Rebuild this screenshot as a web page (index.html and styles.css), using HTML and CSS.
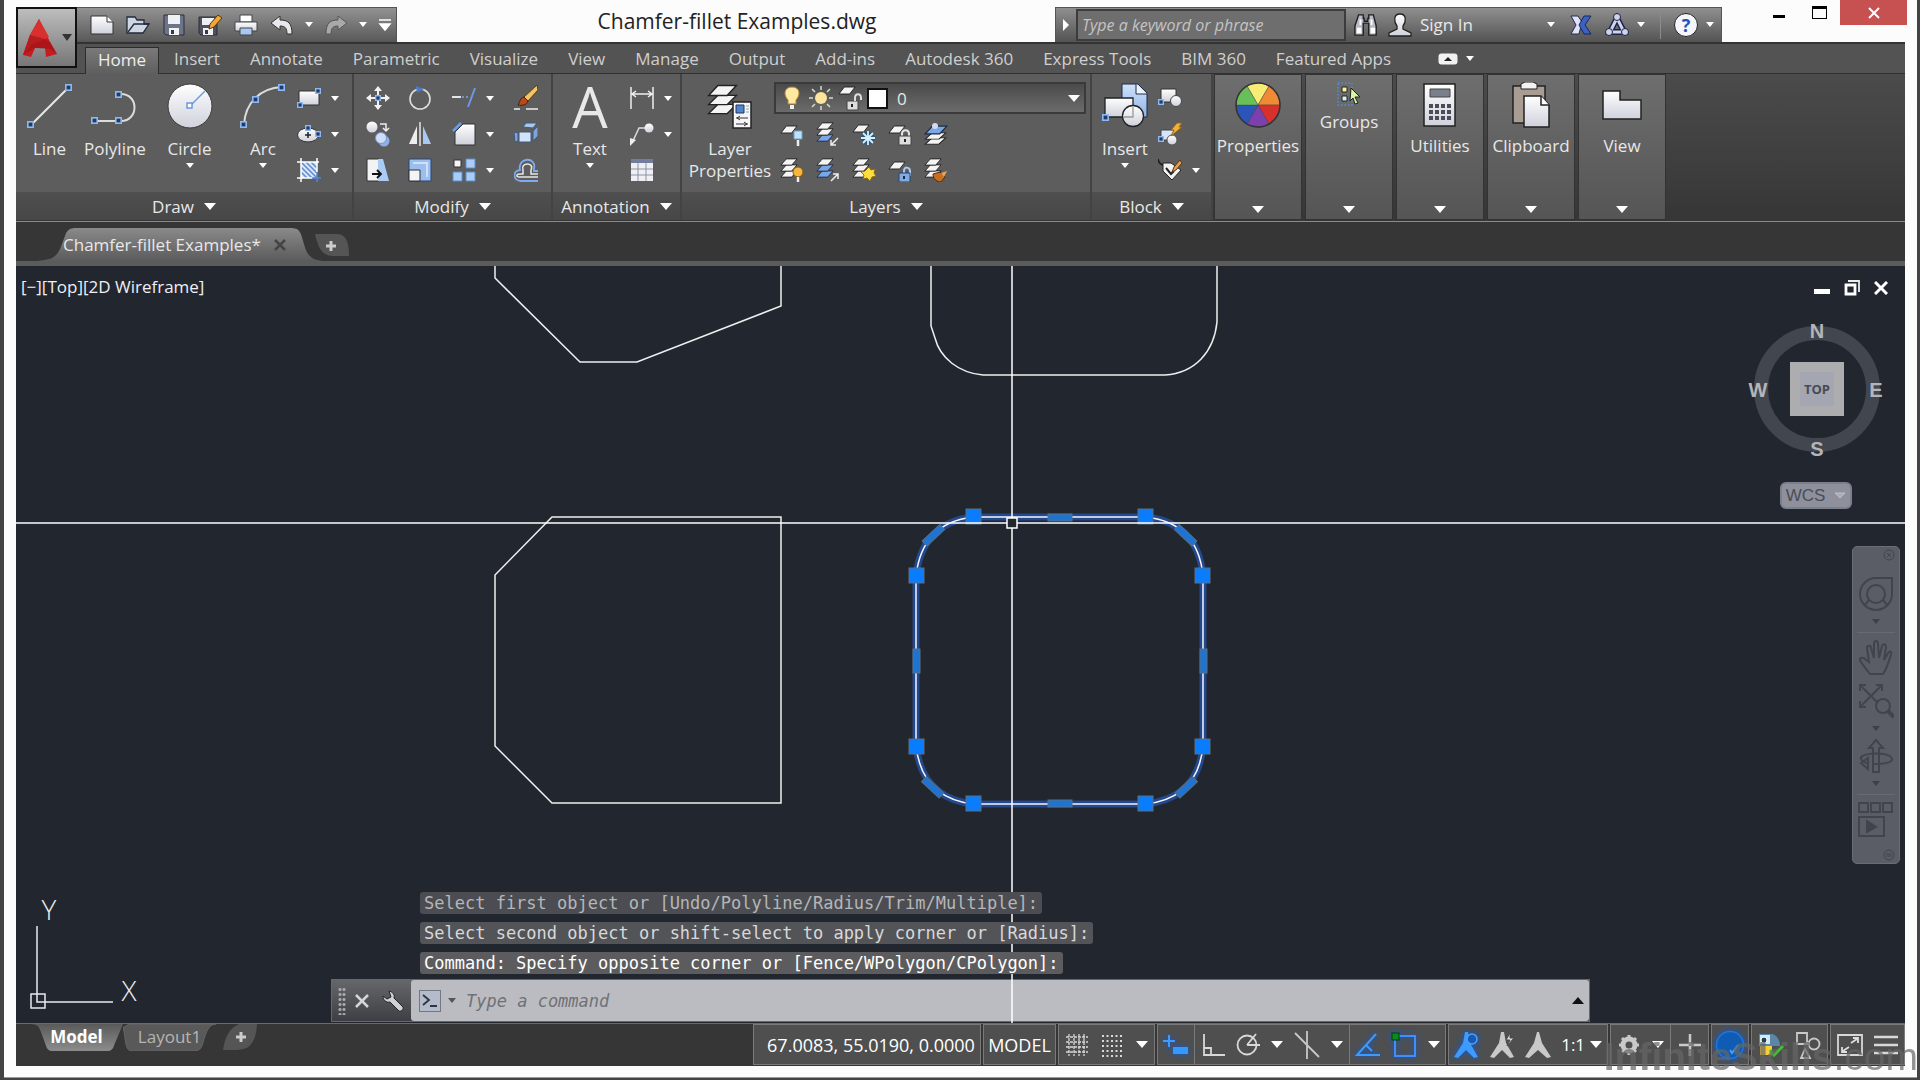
FILE: index.html
```html
<!DOCTYPE html>
<html lang="en">
<head>
    <meta charset="UTF-8">
    <meta name="viewport" content="width=device-width, initial-scale=1.0">
    <title>Chamfer-fillet Examples.dwg</title>
    <link rel="stylesheet" href="styles.css">
</head>
<body>
    <!-- shared icon parts -->
    <svg class="defs" width="0" height="0" aria-hidden="true">
        <defs>
            <linearGradient id="metal" x1="0" y1="0" x2="0" y2="1">
                <stop offset="0" stop-color="#fff"/>
                <stop offset="1" stop-color="#cfd1dc"/>
            </linearGradient>
            <linearGradient id="sky" x1="0" y1="0" x2="0" y2="1">
                <stop offset="0" stop-color="#cfe2fa"/>
                <stop offset="1" stop-color="#8fb4e8"/>
            </linearGradient>
            <linearGradient id="fileTabFill" x1="0" y1="0" x2="0" y2="1">
                <stop offset="0" stop-color="#8a8a8a"/>
                <stop offset="1" stop-color="#5b5b5b"/>
            </linearGradient>
            <linearGradient id="modelTabFill" x1="0" y1="0" x2="0" y2="1">
                <stop offset="0" stop-color="#5a5a5a"/>
                <stop offset="1" stop-color="#8c8c8c"/>
            </linearGradient>
            <symbol id="grip" viewBox="0 0 6 6">
                <rect x="0.7" y="0.7" width="4.6" height="4.6" fill="#223a66" stroke="#8db8f2" stroke-width="1.4"/>
            </symbol>
            <symbol id="sheet" viewBox="0 0 20 9" preserveAspectRatio="none">
                <path d="M7 1h12l-6 7H1z" fill="#f4f4f4" stroke="#222" stroke-width="1"/>
            </symbol>
            <symbol id="sheetBlue" viewBox="0 0 20 9" preserveAspectRatio="none">
                <path d="M7 1h12l-6 7H1z" fill="#7ba7e6" stroke="#1d2c4a" stroke-width="1"/>
            </symbol>
        </defs>
    </svg>

    <div class="window">
        <header class="titlebar">
            <button class="app-button" aria-label="Application menu">
                <svg width="36" height="40" viewBox="0 0 36 40">
                    <path d="M17 1 L28 24 L35 36 L24 39 L23 30 H13 L9 39 L1 37 L8 17z" fill="#c41c20"/>
                    <path d="M17 1 L8 17 L1 37 L9 27 L27 19z" fill="#d8302f"/>
                    <path d="M8 17 L20 20 L28 24 L35 36 L28 31 L13 30 L1 37z" fill="#a01014" opacity=".6"/>
                </svg>
                <span class="caret dark"></span>
            </button>

            <div class="quick-access">
                <button aria-label="New">
                    <svg width="24" height="22" viewBox="0 0 24 22"><path d="M1 2h16l6 6v12H1z" fill="url(#metal)" stroke="#333"/><path d="M17 2v6h6" fill="#fff" stroke="#333"/></svg>
                </button>
                <button aria-label="Open">
                    <svg width="24" height="22" viewBox="0 0 24 22"><path d="M1 3h8l2 3h7v4h5l-6 9H1z" fill="#cfd6e4" stroke="#222b3c" stroke-width="1.3"/><path d="M2 18l6-8h15" fill="none" stroke="#222b3c" stroke-width="1.3"/></svg>
                </button>
                <button aria-label="Save">
                    <svg width="24" height="22" viewBox="0 0 24 22"><path d="M2 1h20v20H4l-2-2z" fill="#6c7488" stroke="#2a2e3a"/><path d="M6 1h12v9H6z" fill="#eef0f6"/><path d="M7 14h10v7H7z" fill="#f2f2f5"/><path d="M9 16h3v4H9z" fill="#333a4c"/></svg>
                </button>
                <button aria-label="Save As">
                    <svg width="24" height="22" viewBox="0 0 24 22"><path d="M1 3h18v18H3l-2-2z" fill="#4d525e" stroke="#2a2e3a"/><path d="M4 4h12v7H4z" fill="#eef0f6"/><path d="M5 14h10v7H5z" fill="#f2f2f5"/><path d="M7 16h3v4H7z" fill="#333a4c"/><path d="M12 10l8-9 4 3-8 9-5 2z" fill="#efa83c" stroke="#59320a"/></svg>
                </button>
                <button aria-label="Plot">
                    <svg width="24" height="22" viewBox="0 0 24 22"><path d="M6 1h12v7H6z" fill="#fff" stroke="#444"/><path d="M1 8h22v9H1z" fill="url(#metal)" stroke="#444"/><path d="M6 14h12v7H6z" fill="#a8c8f3" stroke="#444"/></svg>
                </button>
                <button aria-label="Undo">
                    <svg width="24" height="20" viewBox="0 0 24 20"><path d="M1 8l9-7v4c8 0 12 3 12 14h-5c0-6-2-8-7-8v4z" fill="#e8e8ee" stroke="#333"/></svg>
                </button>
                <button class="slim" aria-label="Undo list"><span class="caret small"></span></button>
                <button aria-label="Redo">
                    <svg width="24" height="20" viewBox="0 0 24 20"><path d="M23 8l-9-7v4C6 5 2 8 2 19h5c0-6 2-8 7-8v4z" fill="#a9a9a9" stroke="#555"/></svg>
                </button>
                <button class="slim" aria-label="Redo list"><span class="caret small"></span></button>
                <button aria-label="Customize toolbar">
                    <svg width="14" height="14" viewBox="0 0 14 14"><path d="M1 2h12M2 6l5 6 5-6z" fill="#fff" stroke="#fff" stroke-width="1.5"/></svg>
                </button>
            </div>

            <h1 class="doc-title">Chamfer-fillet Examples.dwg</h1>

            <div class="info-center">
                <button class="info-toggle" aria-label="Collapse search"><svg width="8" height="12" viewBox="0 0 8 12"><path d="M1 0l6 6-6 6z" fill="#fff"/></svg></button>
                <input type="text" aria-label="Search" placeholder="Type a keyword or phrase">
                <button aria-label="Find">
                    <svg width="24" height="24" viewBox="0 0 26 24"><path d="M5 1h5v4h1v3h4V5h1V1h5l3 12v10h-8V10h-6v13H1V13z" fill="#b9bcc6" stroke="#1e1e1e" stroke-width="1.5"/><path d="M3 15h5v6H3zM18 15h5v6h-5zM6 6h2v6H6zM18 6h2v6h-2z" fill="#fff"/></svg>
                </button>
                <button class="sign-in">
                    <svg width="24" height="24" viewBox="0 0 24 24"><path d="M12 1c-7 0-6 8-3 12v3l-8 4v3h22v-3l-8-4v-3c3-4 4-12-3-12z" fill="url(#metal)" stroke="#222" stroke-width="1.3"/></svg>
                    Sign In
                    <span class="caret small"></span>
                </button>
                <button class="exchange" aria-label="Exchange Apps">
                    <svg width="22" height="20" viewBox="0 0 22 20"><path d="M1 1h7l4 6-3 12H1l5-9z" fill="#dfe3f5" stroke="#222a55"/><path d="M21 1h-7l-5 9 5 9h7l-6-9z" fill="#3b62c0" stroke="#18265c"/></svg>
                </button>
                <button class="pair" aria-label="Autodesk network">
                    <svg width="24" height="24" viewBox="0 0 24 24"><path d="M12 5L5 19h14z" fill="none" stroke="#1d2342" stroke-width="6"/><path d="M12 5L5 19h14z" fill="none" stroke="#cfd3ee" stroke-width="3"/><g fill="#cfd3ee" stroke="#1d2342"><circle cx="12" cy="4" r="3.5"/><circle cx="4" cy="19" r="3.5"/><circle cx="20" cy="19" r="3.5"/></g></svg>
                    <span class="caret small"></span>
                </button>
                <span class="divider"></span>
                <button class="pair" aria-label="Help">
                    <span class="help-mark">?</span>
                    <span class="caret small"></span>
                </button>
            </div>

            <div class="window-controls">
                <button aria-label="Minimize"><svg width="12" height="10" viewBox="0 0 12 10"><path d="M0 7h12v3H0z"/></svg></button>
                <button aria-label="Maximize"><svg width="15" height="13" viewBox="0 0 15 13"><path d="M0 0h15v13H0zM1 3v9h13V3z" fill-rule="evenodd"/></svg></button>
                <button class="close" aria-label="Close"><svg width="12" height="12" viewBox="0 0 12 12"><path d="M1 1l10 10M11 1L1 11" stroke="#fff" stroke-width="2"/></svg></button>
            </div>
        </header>

        <nav class="ribbon-tabs">
            <a href="#" class="active">Home</a>
            <a href="#">Insert</a>
            <a href="#">Annotate</a>
            <a href="#">Parametric</a>
            <a href="#">Visualize</a>
            <a href="#">View</a>
            <a href="#">Manage</a>
            <a href="#">Output</a>
            <a href="#">Add-ins</a>
            <a href="#">Autodesk 360</a>
            <a href="#">Express Tools</a>
            <a href="#">BIM 360</a>
            <a href="#">Featured Apps</a>
            <button class="ribbon-min" aria-label="Minimize ribbon">
                <svg width="20" height="12" viewBox="0 0 20 12"><rect x="0.5" y="0.5" width="19" height="11" rx="3" fill="#f1f1f1"/><path d="M6 8l4-4 4 4z" fill="#222"/></svg>
                <span class="caret small"></span>
            </button>
        </nav>

        <div class="ribbon">
            <section class="panel draw">
                <div class="panel-body">
                    <button class="big">
                        <svg width="46" height="46" viewBox="0 0 46 46"><path d="M4 42L42 4" stroke="#e8e8e8" stroke-width="2"/><use href="#grip" x="0" y="38" width="7" height="7"/><use href="#grip" x="38" y="1" width="7" height="7"/></svg>
                        Line
                    </button>
                    <button class="big">
                        <svg width="48" height="46" viewBox="0 0 48 46"><path d="M4 38h26c18 0 18-27 0-27" fill="none" stroke="#dcdcdc" stroke-width="2"/><use href="#grip" x="0" y="34" width="7" height="7"/><use href="#grip" x="24" y="34" width="7" height="7"/><use href="#grip" x="24" y="8" width="7" height="7"/></svg>
                        Polyline
                    </button>
                    <button class="big">
                        <svg width="46" height="46" viewBox="0 0 46 46"><circle cx="23" cy="23" r="22" fill="url(#metal)" stroke="#3a3a3a"/><path d="M23 23L38 8" stroke="#6d9ad6" stroke-width="1.5"/><rect x="20" y="20" width="5" height="5" fill="#fff" stroke="#5f92da" stroke-width="1.4"/></svg>
                        Circle
                        <span class="caret small"></span>
                    </button>
                    <button class="big">
                        <svg width="46" height="46" viewBox="0 0 46 46"><path d="M4 42C5 20 20 5 42 4" fill="none" stroke="#dcdcdc" stroke-width="2"/><use href="#grip" x="0" y="38" width="7" height="7"/><use href="#grip" x="12" y="13" width="7" height="7"/><use href="#grip" x="38" y="1" width="7" height="7"/></svg>
                        Arc
                        <span class="caret small"></span>
                    </button>
                    <div class="tools">
                        <button class="drop" aria-label="Rectangle"><svg width="24" height="24" viewBox="0 0 24 24"><path d="M2 5h20v14H2z" fill="url(#metal)" stroke="#333"/><use href="#grip" x="0" y="16" width="6" height="6"/><use href="#grip" x="18" y="2" width="6" height="6"/></svg><span class="caret small"></span></button>
                        <button class="drop" aria-label="Ellipse"><svg width="24" height="24" viewBox="0 0 24 24"><ellipse cx="11" cy="13" rx="10.5" ry="7" fill="url(#metal)" stroke="#333"/><path d="M11 10v6M8 13h6" stroke="#222" stroke-width="1.5"/><use href="#grip" x="8" y="3" width="6" height="6"/><use href="#grip" x="18" y="9" width="6" height="6"/></svg><span class="caret small"></span></button>
                        <button class="drop" aria-label="Hatch"><svg width="24" height="24" viewBox="0 0 24 24"><path d="M4 4h16v16H4z" fill="#d9e6fb"/><path d="M4 4l16 16M9 4l11 11M14 4l6 6M4 9l11 11M4 14l6 6" stroke="#5c8bd0" stroke-width="1.5"/><path d="M0 4h22M4 0v24M20 0v14M0 20h16" stroke="#fff" stroke-width="1.5"/><path d="M20 14v10M15 20h9" stroke="#4f86dc" stroke-width="1.5"/></svg><span class="caret small"></span></button>
                    </div>
                </div>
                <button class="panel-title">Draw <span class="caret"></span></button>
            </section>

            <section class="panel modify">
                <div class="panel-body tool-grid">
                    <button aria-label="Move"><svg width="24" height="24" viewBox="0 0 24 24"><path d="M12 0l4 5h-3v4h-2V5H8zM12 24l4-5h-3v-4h-2v4H8zM0 12l5-4v3h4v2H5v3zM24 12l-5-4v3h-4v2h4v3z" fill="#f2f2f2"/><use href="#grip" x="9" y="9" width="6" height="6"/></svg></button>
                    <button aria-label="Rotate"><svg width="24" height="24" viewBox="0 0 24 24"><circle cx="12" cy="13" r="10" fill="none" stroke="#dedede" stroke-width="1.6"/><path d="M8 0l8 3-7 4z" fill="#4a7bd0"/></svg></button>
                    <button class="drop" aria-label="Trim"><svg width="24" height="24" viewBox="0 0 24 24"><path d="M0 11h9" stroke="#e4e4e4" stroke-width="2"/><path d="M10 11h6" stroke="#7aa7ee" stroke-width="1.5" stroke-dasharray="2 2"/><path d="M23 2l-7 19" stroke="#6b9ae4" stroke-width="2"/></svg><span class="caret small"></span></button>
                    <button aria-label="Erase"><svg width="24" height="26" viewBox="0 0 24 26"><path d="M23 0L10 12l4 4L24 5z" fill="#f0c468" stroke="#5e3a10"/><path d="M10 12c-4 1-4 5-6 8 4 1 9 0 10-4z" fill="#b64a1c" stroke="#4a1c08"/><path d="M0 24h6M12 24h12" stroke="#eee" stroke-width="1.5"/></svg></button>

                    <button aria-label="Copy"><svg width="24" height="26" viewBox="0 0 24 26"><circle cx="6" cy="6" r="5.5" fill="url(#metal)"/><circle cx="18" cy="20" r="5.5" fill="#8cb0e8"/><circle cx="15" cy="17" r="5.5" fill="#cfdef6" stroke="#7498cd"/><path d="M14 3h6v6M17 7l3 3 3-3" fill="none" stroke="#eee" stroke-width="1.5"/></svg></button>
                    <button aria-label="Mirror"><svg width="24" height="24" viewBox="0 0 24 24"><path d="M9 4v18H1z" fill="#eee"/><path d="M15 4v18h8z" fill="#a9c8f2"/><path d="M12 0v24" stroke="#dcdcdc" stroke-width="1.6"/></svg></button>
                    <button class="drop" aria-label="Chamfer"><svg width="24" height="24" viewBox="0 0 24 24"><path d="M3 23V10L11 2h12v21z" fill="url(#metal)" stroke="#333"/><path d="M1 9l8-8" stroke="#6b9ae4" stroke-width="2.5"/></svg><span class="caret small"></span></button>
                    <button aria-label="Explode"><svg width="24" height="24" viewBox="0 0 24 24"><path d="M9 5l3-4h11l-4 5z" fill="#a9c8ef" stroke="#42597e"/><path d="M5 10h12v10H5z" fill="#d3e3fa" stroke="#42597e"/><path d="M19 9l5-5v10l-5 5zM0 10l4 1v8l-3 1z" fill="#7ca3da" stroke="#42597e"/></svg></button>

                    <button aria-label="Stretch"><svg width="24" height="24" viewBox="0 0 24 24"><path d="M1 1h12v22H1z" fill="#f3f3f3" stroke="#333"/><path d="M12 1h5l6 22H12z" fill="#a9ccf4"/><path d="M6 16h9M11 12l4 4-4 4" fill="none" stroke="#111" stroke-width="1.8"/></svg></button>
                    <button aria-label="Scale"><svg width="24" height="24" viewBox="0 0 24 24"><path d="M1 1h22v22H1z" fill="#9abef0" stroke="#2c4470"/><path d="M5 5h14v14" fill="none" stroke="#cfe0f8" stroke-width="2"/><path d="M1 12h11v11H1z" fill="#f4f4f7" stroke="#333"/></svg></button>
                    <button class="drop" aria-label="Array"><svg width="24" height="24" viewBox="0 0 24 24"><path d="M2 2h7v7H2z" fill="#f4f4f4" stroke="#333"/><path d="M14 1h9v9h-9zM1 14h9v9H1zM14 14h9v9h-9z" fill="#a9cdf7" stroke="#5d8ecb"/></svg><span class="caret small"></span></button>
                    <button aria-label="Offset"><svg width="24" height="24" viewBox="0 0 24 24"><path d="M24 16h-7v-4c4-8-11-8-8 0v4H6c-4 0-4 3-1 3h19" fill="none" stroke="#e8e8e8" stroke-width="1.5"/><path d="M24 13h-4v-2c3-13-17-12-14 1-8 1-7 11 1 11h17" fill="none" stroke="#80aaee" stroke-width="1.8"/></svg></button>
                </div>
                <button class="panel-title">Modify <span class="caret"></span></button>
            </section>

            <section class="panel annotation">
                <div class="panel-body">
                    <button class="big">
                        <span class="letter">A</span>
                        Text
                        <span class="caret small"></span>
                    </button>
                    <div class="tools">
                        <button class="drop" aria-label="Dimension"><svg width="24" height="24" viewBox="0 0 24 24"><path d="M1 1v22M23 1v22M2 8h20M6 5L2 8l4 3M18 5l4 3-4 3" fill="none" stroke="#eee" stroke-width="1.5"/></svg><span class="caret small"></span></button>
                        <button class="drop" aria-label="Leader"><svg width="24" height="24" viewBox="0 0 24 24"><path d="M2 21L9 6h7" fill="none" stroke="#ddd" stroke-width="1.5"/><path d="M0 16v8l6-6z" fill="#eee"/><circle cx="19" cy="6" r="4.5" fill="url(#metal)"/></svg><span class="caret small"></span></button>
                        <button aria-label="Table"><svg width="24" height="24" viewBox="0 0 24 24"><path d="M1 1h22v22H1z" fill="#f0f0f4"/><path d="M1 1h22v4H1z" fill="#717c9e"/><path d="M1 11h22M1 17h22M8 5v18M16 5v18" stroke="#8d93a6"/></svg></button>
                    </div>
                </div>
                <button class="panel-title">Annotation <span class="caret"></span></button>
            </section>

            <section class="panel layers">
                <div class="panel-body">
                    <button class="big">
                        <svg width="46" height="46" viewBox="0 0 46 46"><use href="#sheet" x="0" y="20" width="31" height="12"/><use href="#sheet" x="0" y="11" width="31" height="12"/><use href="#sheet" x="0" y="1" width="31" height="13"/><path d="M26 19h18v26H26z" fill="#f6f6f8" stroke="#222" stroke-width="1.5"/><path d="M29 22h8v8h-8z" fill="#4f86cf" stroke="#1e355e"/><path d="M39 23h3M39 26h3M39 29h3" stroke="#8aa"/><path d="M29 35h12M29 41h12M33 33l-3 2 3 2M37 39l3 2-3 2" fill="none" stroke="#333"/></svg>
                        Layer<br>Properties
                    </button>
                    <div class="layer-tools">
                        <div class="layer-combo">
                            <svg width="24" height="24" viewBox="0 0 24 24"><path d="M12 1c-8 0-9 8-4 13v4h8v-4c5-5 4-13-4-13z" fill="#ffe9a0" stroke="#a3813b"/><path d="M10 19h4v4h-4z" fill="#eee"/></svg>
                            <svg width="24" height="24" viewBox="0 0 24 24"><circle cx="12" cy="12" r="6" fill="#fbe49c"/><path d="M12 0v4M12 20v4M0 12h4M20 12h4M3 3l3 3M18 18l3 3M21 3l-3 3M6 18l-3 3" stroke="#d9d9c8" stroke-width="1.5"/></svg>
                            <svg width="24" height="26" viewBox="0 0 24 26"><use href="#sheet" x="0" y="1" width="18" height="9"/><path d="M9 16h11v9H9z" fill="#ddd" stroke="#444"/><path d="M17 16v-3c0-5 6-5 6 0v2" fill="none" stroke="#ddd" stroke-width="2"/><path d="M14 19v3" stroke="#222" stroke-width="2"/></svg>
                            <span class="swatch"></span>
                            <select aria-label="Current layer"><option>0</option></select>
                            <span class="caret"></span>
                        </div>
                        <div class="layer-grid">
                            <button aria-label="Layer off"><svg width="24" height="24" viewBox="0 0 24 24"><use href="#sheet" x="0" y="3" width="18" height="9"/><path d="M14 9h8v8h-8z" fill="#bfe2fb" stroke="#6fa1c8"/><path d="M18 18v6" stroke="#eee" stroke-width="2.5"/></svg></button>
                            <button aria-label="Isolate"><svg width="24" height="24" viewBox="0 0 24 24"><use href="#sheetBlue" x="0" y="12" width="18" height="8"/><use href="#sheet" x="0" y="6" width="18" height="8"/><use href="#sheet" x="0" y="0" width="18" height="8"/><path d="M22 16l-7 7M15 18v5h5" fill="none" stroke="#eee" stroke-width="1.5"/></svg></button>
                            <button aria-label="Freeze"><svg width="24" height="24" viewBox="0 0 24 24"><use href="#sheet" x="0" y="2" width="18" height="9"/><path d="M16 9v14M9 16h14M11 11l10 10M21 11L11 21" stroke="#2b5877" stroke-width="4"/><path d="M16 9v14M9 16h14M11 11l10 10M21 11L11 21" stroke="#d6f1ff" stroke-width="1.8"/></svg></button>
                            <button aria-label="Lock"><svg width="24" height="24" viewBox="0 0 24 24"><use href="#sheet" x="0" y="3" width="18" height="9"/><path d="M14 14v-2c0-5 7-5 7 0v2" fill="none" stroke="#e4e4e4" stroke-width="2"/><path d="M11 14h12v9H11z" fill="#ddd" stroke="#444"/><path d="M17 17v3" stroke="#222" stroke-width="2"/></svg></button>
                            <button aria-label="Make current"><svg width="24" height="24" viewBox="0 0 24 24"><use href="#sheet" x="0" y="15" width="23" height="8"/><use href="#sheet" x="0" y="10" width="23" height="8"/><use href="#sheetBlue" x="0" y="3" width="24" height="10"/><circle cx="11" cy="4" r="3" fill="#cfdcf2"/></svg></button>
                            <button aria-label="Turn all on"><svg width="24" height="24" viewBox="0 0 24 24"><use href="#sheet" x="0" y="12" width="18" height="8"/><use href="#sheet" x="0" y="6" width="18" height="8"/><use href="#sheet" x="0" y="0" width="18" height="8"/><circle cx="18" cy="14" r="5" fill="#f6b83c" stroke="#8a5410"/><path d="M18 19v5" stroke="#eee" stroke-width="2.5"/></svg></button>
                            <button aria-label="Unisolate"><svg width="24" height="24" viewBox="0 0 24 24"><use href="#sheetBlue" x="0" y="12" width="18" height="8"/><use href="#sheetBlue" x="0" y="6" width="18" height="8"/><use href="#sheet" x="0" y="0" width="18" height="8"/><path d="M15 23l7-7M17 16h5v5" fill="none" stroke="#eee" stroke-width="1.5"/></svg></button>
                            <button aria-label="Thaw all"><svg width="24" height="24" viewBox="0 0 24 24"><use href="#sheet" x="0" y="12" width="18" height="8"/><use href="#sheet" x="0" y="6" width="18" height="8"/><use href="#sheet" x="0" y="0" width="18" height="8"/><path d="M17 9l2 3 4-1-1 4 2 3-4 1-2 4-3-3-4 1 1-4-3-3 4-1z" fill="#ffdf3f" stroke="#8c6a10"/></svg></button>
                            <button aria-label="Unlock"><svg width="24" height="24" viewBox="0 0 24 24"><use href="#sheet" x="0" y="3" width="18" height="9"/><path d="M16 15v-2c0-5 6-4 6 0v5" fill="none" stroke="#a9cbf3" stroke-width="2"/><path d="M11 15h11v9H11z" fill="#7fabe4" stroke="#24426e"/><path d="M16 18v3" stroke="#15294a" stroke-width="2"/></svg></button>
                            <button aria-label="Match layer"><svg width="24" height="24" viewBox="0 0 24 24"><use href="#sheet" x="0" y="12" width="18" height="8"/><use href="#sheet" x="0" y="6" width="18" height="8"/><use href="#sheet" x="0" y="0" width="18" height="8"/><path d="M9 16l7-2 5 5-4 5c-4 0-8-3-8-8z" fill="#c66e22" stroke="#53290a"/><path d="M17 15l6-2-3 6z" fill="#e5a45b"/></svg></button>
                        </div>
                    </div>
                </div>
                <button class="panel-title">Layers <span class="caret"></span></button>
            </section>

            <section class="panel block">
                <div class="panel-body">
                    <button class="big">
                        <svg width="46" height="46" viewBox="0 0 46 46"><path d="M20 1h16l9 9v24H20z" fill="url(#sky)" stroke="#1f2b42"/><path d="M34 1v10h11" fill="#eef4fd" stroke="#1f2b42"/><path d="M3 15h28v19H3z" fill="url(#metal)" stroke="#222" stroke-width="1.3"/><circle cx="31" cy="33" r="10.5" fill="url(#metal)" stroke="#222" stroke-width="1.3"/><path d="M31 24v10h-9" fill="none" stroke="#999" stroke-width="1.3"/><use href="#grip" x="0" y="31" width="7" height="7"/></svg>
                        Insert
                        <span class="caret small"></span>
                    </button>
                    <div class="tools">
                        <button aria-label="Create block"><svg width="24" height="24" viewBox="0 0 24 24"><path d="M3 3h15v13H3z" fill="url(#metal)" stroke="#333"/><circle cx="18" cy="15" r="5.5" fill="url(#metal)" stroke="#444"/><use href="#grip" x="0" y="13" width="6" height="6"/></svg></button>
                        <button aria-label="Edit block"><svg width="24" height="24" viewBox="0 0 24 24"><path d="M3 8h13v10H3z" fill="#d7e5fb" stroke="#444"/><circle cx="14" cy="18" r="5" fill="url(#metal)" stroke="#555"/><path d="M19 1h5l-3 4h3L13 14l3-6h-3z" fill="#f0b13c" stroke="#9a6211"/><use href="#grip" x="0" y="14" width="6" height="6"/></svg></button>
                        <button class="drop" aria-label="Edit attributes"><svg width="24" height="24" viewBox="0 0 24 24"><path d="M0 1c1 5 3 6 6 6" fill="none" stroke="#1d1d1d" stroke-width="1.5"/><path d="M5 5h8l10 7-9 10L5 13z" fill="#f2f2f2" stroke="#222"/><path d="M8 10l5 6 3-3" fill="none" stroke="#222" stroke-width="2"/><path d="M14 14l2-5 6-7 2 3-6 7z" fill="#e9a04a" stroke="#5a3210"/></svg><span class="caret small"></span></button>
                    </div>
                </div>
                <button class="panel-title">Block <span class="caret"></span></button>
            </section>

            <button class="collapsed">
                <svg width="46" height="46" viewBox="0 0 46 46"><g stroke="#444" stroke-width=".4"><path d="M23 23L12 4a22 22 0 0 1 22 0z" fill="#f7ec75"/><path d="M23 23L34 4a22 22 0 0 1 11 19z" fill="#f08a34"/><path d="M23 23h22a22 22 0 0 1-11 19z" fill="#d8302c"/><path d="M23 23l11 19a22 22 0 0 1-22 0z" fill="#7b3fae"/><path d="M23 23L12 42A22 22 0 0 1 1 23z" fill="#2b55b9"/><path d="M23 23H1A22 22 0 0 1 12 4z" fill="#68c058"/></g><circle cx="23" cy="23" r="22" fill="none" stroke="#333" stroke-width="1.5"/></svg>
                <span>Properties</span>
                <span class="caret"></span>
            </button>
            <button class="collapsed compact">
                <svg width="24" height="24" viewBox="0 0 24 24"><path d="M1 1h14v22H1z" fill="none" stroke="#4f8fe0" stroke-width="1.5" stroke-dasharray="1.5 2"/><path d="M5 5h5v5H5z" fill="#f8f39c" stroke="#222"/><path d="M5 14h5v5H5z" fill="#d7f0ee" stroke="#222"/><path d="M14 6l9 9h-5l3 6-3 1-2-6-3 3z" fill="#d9f5a5" stroke="#222"/></svg>
                <span>Groups</span>
                <span class="caret"></span>
            </button>
            <button class="collapsed">
                <svg width="34" height="46" viewBox="0 0 34 46"><rect x="1" y="2" width="31" height="42" fill="url(#metal)" stroke="#222" stroke-width="1.5"/><path d="M7 7h20v8H7z" fill="#7c808c" stroke="#444"/><path d="M6 24h22M6 30h22M6 36h22" stroke="#4a4d57" stroke-width="4" stroke-dasharray="4 2"/></svg>
                <span>Utilities</span>
                <span class="caret"></span>
            </button>
            <button class="collapsed">
                <svg width="38" height="46" viewBox="0 0 38 46"><path d="M1 4h32v37H1z" fill="#a99c93" stroke="#222" stroke-width="1.5"/><path d="M9 2l4-2h8l4 2v5H9z" fill="#f2f2f2" stroke="#222"/><path d="M12 14h17l8 9v22H12z" fill="url(#metal)" stroke="#222" stroke-width="1.5"/><path d="M29 14v9h8" fill="#fff" stroke="#222" stroke-width="1.5"/></svg>
                <span>Clipboard</span>
                <span class="caret"></span>
            </button>
            <button class="collapsed">
                <svg width="40" height="46" viewBox="0 0 40 46"><path d="M1 9h17v9h21v19H1z" fill="url(#metal)" stroke="#222" stroke-width="1.5"/></svg>
                <span>View</span>
                <span class="caret"></span>
            </button>
        </div>

        <div class="file-tabs">
            <div class="file-tab">
                <svg class="shape" viewBox="0 0 308 34" preserveAspectRatio="none"><path d="M0 34c20 0 26-4 30-14l5-13c2-5 5-7 11-7h224c8 0 10 2 12 7l4 13c3 9 8 14 22 14z" fill="url(#fileTabFill)"/></svg>
                <a href="#">Chamfer-fillet Examples*</a>
                <button aria-label="Close drawing"><svg width="12" height="12" viewBox="0 0 12 12"><path d="M1 1l10 10M11 1L1 11" stroke="#444" stroke-width="2.5"/></svg></button>
            </div>
            <button class="new-tab" aria-label="New drawing"><svg width="34" height="22" viewBox="0 0 34 22"><path d="M0 0h22c8 0 12 6 12 22H18C6 22 3 12 0 0z" fill="#555"/><path d="M16 7v10M11 12h10" stroke="#ccc" stroke-width="3"/></svg></button>
        </div>

        <main class="canvas">
            <div class="command-bar">
                <span class="dots"></span>
                <button aria-label="Close command line"><svg width="14" height="14" viewBox="0 0 14 14"><path d="M1 1l12 12M13 1L1 13" stroke="#d5d5d8" stroke-width="2.5"/></svg></button>
                <button aria-label="Customize"><svg width="22" height="22" viewBox="0 0 22 22"><path d="M7 1c4 1 6 4 5 7l9 9c1 2-2 5-4 4l-9-9C4 13 1 10 1 6l4 3 4-2-1-3z" fill="#d0d0d4" stroke="#222"/></svg></button>
                <div class="command-field">
                    <button aria-label="Recent commands"><svg width="22" height="22" viewBox="0 0 22 22"><rect x="0.5" y="0.5" width="21" height="21" fill="#b4bccb" stroke="#737883"/><path d="M4 5l6 5-6 5M11 16h7" fill="none" stroke="#2c3346" stroke-width="1.8"/></svg><span class="caret small gray"></span></button>
                    <input type="text" aria-label="Command" placeholder="Type a command">
                    <button aria-label="Command history"><svg width="12" height="7" viewBox="0 0 12 7"><path d="M0 7l6-7 6 7z" fill="#111"/></svg></button>
                </div>
            </div>

            <svg class="drawing">
                <g fill="none" stroke="#f0f0f0" stroke-width="1.5">
                    <path d="M479 0v12l85 84h57l144-56V0"/>
                    <path d="M915 0v60l4 12c5 20 24 35 48 37h182c30-2 49-23 52-53V0"/>
                    <path d="M536 251h229v286H536l-57-57V309z"/>
                </g>
                <path d="M957 251h173q52 6 57 59v170q-5 52-57 58H957q-51-6-57-58V310q6-53 57-59z" fill="none" stroke="#24488c" stroke-width="7"/>
                <path d="M957 251h173q52 6 57 59v170q-5 52-57 58H957q-51-6-57-58V310q6-53 57-59z" fill="none" stroke="#f4f6ff" stroke-width="1.5"/>
                <g fill="#1e74d0" stroke="#5b7080">
                    <rect x="1032" y="248" width="24" height="7"/>
                    <rect x="1032" y="534" width="24" height="7"/>
                    <rect x="897" y="383" width="7" height="24"/>
                    <rect x="1184" y="383" width="7" height="24"/>
                    <rect x="-12" y="-3" width="24" height="7" transform="translate(917 269) rotate(-43)"/>
                    <rect x="-12" y="-3" width="24" height="7" transform="translate(1170 269) rotate(43)"/>
                    <rect x="-12" y="-3" width="24" height="7" transform="translate(917 521) rotate(43)"/>
                    <rect x="-12" y="-3" width="24" height="7" transform="translate(1170 521) rotate(-43)"/>
                </g>
                <g fill="#0a7dff" stroke="#5b7080">
                    <rect x="950" y="243" width="15" height="15"/>
                    <rect x="1122" y="243" width="15" height="15"/>
                    <rect x="893" y="302" width="15" height="15"/>
                    <rect x="1179" y="302" width="15" height="15"/>
                    <rect x="893" y="473" width="15" height="15"/>
                    <rect x="1179" y="473" width="15" height="15"/>
                    <rect x="950" y="530" width="15" height="15"/>
                    <rect x="1122" y="530" width="15" height="15"/>
                </g>
                <!-- crosshair -->
                <path d="M991 252h10v10h-10z" fill="#22262f" stroke="#fff" stroke-width="1.5"/>
                <g stroke="#fff" stroke-width="1.5">
                    <line x1="0" y1="257" x2="991" y2="257"/>
                    <line x1="1001" y1="257" x2="100%" y2="257"/>
                    <line x1="996" y1="0" x2="996" y2="252"/>
                    <line x1="996" y1="262" x2="996" y2="100%"/>
                </g>
            </svg>

            <div class="view-label">[−][Top][2D Wireframe]</div>

            <div class="view-controls">
                <button aria-label="Minimize view"><svg width="16" height="14" viewBox="0 0 16 14"><path d="M0 8h16v5H0z" fill="#fff"/></svg></button>
                <button aria-label="Restore view"><svg width="16" height="16" viewBox="0 0 16 16"><path d="M4 1h11v11" fill="none" stroke="#eee" stroke-width="1.8"/><path d="M2 5h9v9H2z" fill="none" stroke="#fff" stroke-width="2.8"/></svg></button>
                <button aria-label="Close view"><svg width="14" height="14" viewBox="0 0 14 14"><path d="M1 1l12 12M13 1L1 13" stroke="#fff" stroke-width="3"/></svg></button>
            </div>

            <svg class="view-cube" width="140" height="140" viewBox="0 0 140 140">
                <circle cx="70" cy="70" r="56" fill="none" stroke="#42464f" stroke-width="14"/>
                <rect x="43" y="43" width="54" height="54" fill="#adadaf"/>
                <rect x="53" y="53" width="34" height="34" fill="#a4a7b2"/>
                <text class="top" x="70" y="75">TOP</text>
                <text x="70" y="19">N</text>
                <text x="70" y="137">S</text>
                <text x="11" y="78">W</text>
                <text x="129" y="78">E</text>
            </svg>
            <button class="wcs">WCS <svg width="12" height="7" viewBox="0 0 12 7"><path d="M1 1h10L6 6z" fill="#a9abb5" stroke="#bfc0c9"/></svg></button>

            <div class="nav-bar">
                <svg class="corner" width="12" height="12" viewBox="0 0 12 12"><circle cx="6" cy="6" r="5"/><path d="M4 4l4 4M8 4L4 8"/></svg>
                <button class="wheel" aria-label="Steering wheel"><svg width="36" height="36" viewBox="0 0 36 36"><path d="M18 2h16v16a16 16 0 1 1-16-16z"/><circle cx="18" cy="18" r="9"/><path d="M11 24l-5 6M25 24l5 6"/></svg></button>
                <span class="caret small nav"></span>
                <hr>
                <button aria-label="Pan"><svg width="36" height="36" viewBox="0 0 36 36"><path d="M12 34C9 30 5 26 2 20c0-3 4-3 6 0l3 2L9 8c0-3 4-3 4 0l3 10V4c0-4 4-4 4 0l1 14 3-12c1-3 4-2 4 1l-2 13 4-7c2-3 4-1 3 1-2 8-4 14-8 20z"/></svg></button>
                <button aria-label="Zoom extents"><svg width="36" height="36" viewBox="0 0 36 36"><path d="M2 2l18 18M24 2L2 24M2 8V2h6M18 2h6v6M2 18v6h6"/><circle cx="25" cy="23" r="7"/><path d="M30 28l6 6" stroke-width="4"/></svg></button>
                <span class="caret small nav"></span>
                <button aria-label="Orbit"><svg width="36" height="36" viewBox="0 0 36 36"><path d="M15 34V10h-4l7-8 7 8h-4v24z"/><path d="M10 26l-5-3c-12-8 28-11 29-2 0 4-10 5-18 5M10 20v11l-7-6z"/></svg></button>
                <span class="caret small nav"></span>
                <hr>
                <button aria-label="ShowMotion"><svg width="36" height="36" viewBox="0 0 36 36"><path d="M1 1h9v9H1zM13 1h9v9h-9zM25 1h9v9h-9zM1 15h25v19H1z"/><path d="M9 19v11l9-5z" fill="#40444d"/></svg></button>
                <svg class="corner low" width="12" height="12" viewBox="0 0 12 12"><circle cx="6" cy="6" r="5"/><path d="M3 5h6M3 7h6"/></svg>
            </div>

            <svg class="ucs" width="120" height="124" viewBox="0 0 120 124">
                <path d="M11 39v76h76M5 107h14v14H5z" fill="none" stroke="#e8eaf0" stroke-width="1.5"/>
                <text x="23" y="33">Y</text>
                <text x="103" y="114">X</text>
            </svg>

            <div class="history">
                <p class="old">Select first object or [Undo/Polyline/Radius/Trim/Multiple]:</p>
                <p class="mid">Select second object or shift-select to apply corner or [Radius]:</p>
                <p>Command: Specify opposite corner or [Fence/WPolygon/CPolygon]:</p>
            </div>
        </main>

        <footer class="status-bar">
            <div class="layout-tabs">
                <a href="#" class="active">
                    <svg class="shape" viewBox="0 0 94 28" preserveAspectRatio="none"><path d="M0 0c8 0 9 3 11 8l5 14c1 4 3 6 7 6h55c4 0 6-2 7-6l9-22z" fill="url(#modelTabFill)"/></svg>
                    <span>Model</span>
                </a>
                <a href="#">
                    <svg class="shape" viewBox="0 0 94 28" preserveAspectRatio="none"><path d="M0 4c2 5 2 18 5 22 1 2 3 2 6 2h60c5 0 8-2 9-6 3-9 5-22 14-22H6z" fill="#595959" stroke="#666"/></svg>
                    <span>Layout1</span>
                </a>
                <button class="new-tab" aria-label="New layout"><svg width="34" height="26" viewBox="0 0 34 26"><path d="M34 0H16C7 4 2 12 0 26h14c14 0 19-9 20-26z" fill="#555"/><path d="M18 8v10M13 13h10" stroke="#ccc" stroke-width="3"/></svg></button>
            </div>

            <div class="status-cells">
                <button class="cell coords">67.0083, 55.0190, 0.0000</button>
                <button class="cell model">MODEL</button>
                <div class="cell grid-cell">
                    <button aria-label="Grid"><svg width="24" height="24" viewBox="0 0 24 24"><path d="M4 1v22M9 1v22M14 1v22M19 1v22M1 4h22M1 9h22M1 14h22M1 19h22" stroke="#d8d8d8" stroke-width="1.3" stroke-dasharray="3 1"/></svg></button>
                    <button aria-label="Snap"><svg width="24" height="24" viewBox="0 0 24 24"><path d="M2 3h22M2 8h22M2 13h22M2 18h22M2 23h22" stroke="#d8d8d8" stroke-width="1.8" stroke-dasharray="2 2.5"/></svg></button>
                    <button aria-label="Snap options"><span class="caret"></span></button>
                </div>
                <button class="cell dyn" aria-label="Dynamic input"><svg class="glow" width="26" height="24" viewBox="0 0 26 24"><path d="M6 2v12M0 8h12" stroke="#3d9bff" stroke-width="2"/><rect x="10" y="14" width="15" height="7" fill="#3399ff"/></svg></button>
                <div class="cell joined track">
                    <button aria-label="Ortho"><svg width="24" height="24" viewBox="0 0 24 24"><path d="M3 1v21h21M3 15h7v7" fill="none" stroke="#d8d8d8" stroke-width="1.8"/></svg></button>
                    <button aria-label="Polar"><svg width="24" height="24" viewBox="0 0 24 24"><circle cx="11" cy="12" r="9.5" fill="none" stroke="#d8d8d8" stroke-width="1.8"/><path d="M11 12h13M11 12l9-11" stroke="#d8d8d8" stroke-width="1.8"/></svg></button>
                    <button aria-label="Polar options"><span class="caret"></span></button>
                    <button aria-label="Isodraft"><svg width="26" height="28" viewBox="0 0 26 28"><path d="M13 0v28M1 2l24 24" stroke="#c8c8c8" stroke-width="1.8"/></svg></button>
                    <button aria-label="Isodraft options"><span class="caret"></span></button>
                </div>
                <div class="cell joined snap">
                    <button aria-label="Object tracking"><svg class="glow" width="26" height="24" viewBox="0 0 26 24"><path d="M21 1L2 22h23M11 12l6 6" fill="none" stroke="#3d9bff" stroke-width="2"/></svg></button>
                    <button aria-label="Object snap"><svg class="glow" width="26" height="26" viewBox="0 0 26 26"><path d="M4 4h20v20H4z" fill="none" stroke="#3d8fff" stroke-width="2"/><rect x="1" y="1" width="7" height="7" fill="#0c8a1b" stroke="#063f0b"/></svg></button>
                    <button aria-label="Snap options"><span class="caret"></span></button>
                </div>
                <div class="cell anno">
                    <button aria-label="Annotation visibility"><svg class="glow" width="26" height="26" viewBox="0 0 26 26"><path d="M11 0h3l2 11 8 14-4 1-8-8-8 8-4-1 9-14z" fill="#3d9bff"/><circle cx="18" cy="7" r="5" fill="#195bb3" stroke="#4aa3ff" stroke-width="1.5"/></svg></button>
                    <button aria-label="Auto scale"><svg width="26" height="26" viewBox="0 0 26 26"><path d="M11 0h3l2 11 8 14-4 1-8-8-8 8-4-1 9-14z" fill="#c9c9c9"/><path d="M20 1l-4 7h4l-3 6 7-8h-4z" fill="#ddd" stroke="#4a4a4a"/></svg></button>
                    <button aria-label="Annotation scale"><svg width="26" height="26" viewBox="0 0 26 26"><path d="M12 0h2l3 11 9 14-4 1-9-8-9 8-4-1 9-14z" fill="#c9c9c9"/></svg></button>
                    <button>1:1 <span class="caret"></span></button>
                </div>
                <div class="cell gear">
                    <button aria-label="Workspace"><svg width="24" height="24" viewBox="0 0 24 24"><circle cx="12" cy="12" r="6" fill="none" stroke="#c9c9c9" stroke-width="5"/><path d="M12 2v4M12 18v4M2 12h4M18 12h4M5 5l3 3M16 16l3 3M19 5l-3 3M8 16l-3 3" stroke="#c9c9c9" stroke-width="3"/></svg></button>
                    <button aria-label="Workspace options"><span class="caret"></span></button>
                </div>
                <button class="cell joined plus" aria-label="Annotation monitor"><svg width="24" height="24" viewBox="0 0 24 24"><path d="M12 1v22M1 12h22" stroke="#c9c9c9" stroke-width="2.5"/></svg></button>
                <button class="cell disc" aria-label="Hardware acceleration"><svg class="glow" width="30" height="30" viewBox="0 0 30 30"><circle cx="15" cy="15" r="13.5" fill="#0f5cb4" stroke="#1f76dd" stroke-width="1.5"/><path d="M15 20l2 3 6-8" fill="none" stroke="#4c9bf0" stroke-width="2"/></svg></button>
                <div class="cell isolate">
                    <button aria-label="Performance"><svg width="26" height="26" viewBox="0 0 26 26"><path d="M1 2h12c6 0 9 7 9 12H1z" fill="#5b86a8"/><path d="M2 3h10v9H2z" fill="#cfe8ff"/><circle cx="6" cy="8" r="3" fill="#244" stroke="#fff"/><path d="M2 14h12v9H2z" fill="#f5d038"/><path d="M12 18l4 5 9-9" fill="none" stroke="#3dc42d" stroke-width="3"/></svg></button>
                    <button aria-label="Isolate objects"><svg width="26" height="28" viewBox="0 0 26 28"><path d="M2 2h10v11H2zM10 18l5 9H6z" fill="none" stroke="#c9c9c9" stroke-width="1.8"/><circle cx="19" cy="13" r="5.5" fill="none" stroke="#c9c9c9" stroke-width="1.8"/></svg></button>
                </div>
                <div class="cell end">
                    <button aria-label="Clean screen"><svg width="26" height="22" viewBox="0 0 26 22"><path d="M1 1h24v20H1z" fill="none" stroke="#d8d8d8" stroke-width="1.8"/><path d="M14 9l6-4M16 4h5v5M12 13l-6 4M5 13v5h5" fill="none" stroke="#ddd" stroke-width="1.8"/></svg></button>
                    <button aria-label="Customization"><svg width="24" height="20" viewBox="0 0 24 20"><path d="M0 2h24M0 10h24M0 18h24" stroke="#d8d8d8" stroke-width="2.5"/></svg></button>
                </div>
            </div>
        </footer>
    </div>

    <div class="watermark"><b>InfiniteSkills</b>.com</div>
</body>
</html>
```
FILE: styles.css
```css
* {
    box-sizing: border-box;
}

body {
    margin: 0;
    height: 100vh;
    overflow: hidden;
    background: #434343;
    font-family: "Open Sans", "Noto Sans", sans-serif;
    font-size: 17px;
    color: #e8e8e8;
    display: flex;
}

button, input, select {
    font: inherit;
    color: inherit;
    background: none;
    border: none;
    padding: 0;
    margin: 0;
}

button {
    cursor: pointer;
    display: flex;
    align-items: center;
    justify-content: center;
}

a {
    color: inherit;
    text-decoration: none;
}

svg {
    display: block;
    flex: none;
}

.defs {
    position: absolute;
}

.caret {
    display: block;
    flex: none;
    border: 6px solid transparent;
    border-top: 7px solid #fff;
    border-bottom: 0;
}

.caret.small {
    border-width: 5px 4px 0;
}

.caret.dark {
    border-top-color: #333;
    border-width: 7px 5px 0;
}

.caret.gray { border-top-color: #555; }
.caret.nav { border-top-color: #3c4048; }

.window {
    flex: 1;
    min-width: 0;
    margin: 0 3px 2px 4px;
    padding: 0 12px 11px;
    background: #fcfcfc;
    border-bottom: 1px solid #999;
    display: flex;
    flex-direction: column;
}

/* title bar */
.titlebar {
    position: relative;
    height: 42px;
    display: flex;
    align-items: flex-end;
}

.app-button {
    position: absolute;
    left: 0;
    top: 7px;
    z-index: 2;
    width: 61px;
    height: 61px;
    gap: 4px;
    border: 2px solid #111;
    background: linear-gradient(#bdbdbd, #777);
}

.quick-access {
    height: 35px;
    width: 381px;
    padding-left: 73px;
    display: flex;
    align-items: center;
    gap: 12px;
    background: linear-gradient(#929292, #5a5a5a);
    border: 1px solid #555;
}

.slim { margin: 0 -1px; }

.doc-title {
    flex: 1;
    align-self: center;
    margin: 0;
    padding-left: 22px;
    font-size: 21px;
    font-weight: 400;
    line-height: 36px;
    color: #222;
    text-align: center;
    white-space: nowrap;
}

.info-center {
    width: 667px;
    height: 35px;
    display: flex;
    align-items: center;
    background: linear-gradient(#8f8f8f, #555);
    border: 1px solid #555;
    padding-right: 7px;
    gap: 8px;
}

.info-toggle {
    width: 20px;
    height: 33px;
    margin-right: -8px;
}

.info-center input {
    width: 270px;
    height: 32px;
    padding-left: 4px;
    background: #6e6e6e;
    border: 2px solid #3c3c3c;
    font-size: 16px;
    font-style: italic;
}

.info-center input::placeholder {
    color: #c4c4c4;
    opacity: 1;
}

.sign-in {
    flex: 1;
    gap: 8px;
    padding-left: 2px;
}

.sign-in .caret { margin-left: auto; }
.exchange { margin: 0 5px 0 7px; }
.pair { gap: 8px; }

.divider {
    width: 1px;
    height: 28px;
    margin: 0 5px 0 7px;
    background: #8c8c8c;
}

.help-mark {
    width: 24px;
    height: 24px;
    border-radius: 50%;
    border: 1px solid #222;
    background: #f4f6fc;
    color: #2452b0;
    font-weight: 700;
    font-size: 18px;
    line-height: 22px;
    text-align: center;
}

.window-controls {
    align-self: flex-start;
    display: flex;
    width: 185px;
    height: 25px;
    margin-right: -2px;
    justify-content: flex-end;
}

.window-controls button { width: 41px; }
.window-controls .close {
    width: 67px;
    background: #c75050;
}

/* ribbon */
.ribbon-tabs {
    height: 32px;
    padding-left: 69px;
    display: flex;
    align-items: flex-end;
    background: #535353;
    border-top: 2px solid #333;
    border-bottom: 1px solid #303030;
    color: #cfcfcf;
}

.ribbon-tabs a {
    padding: 0 15px 3px;
    line-height: 23px;
    white-space: nowrap;
}

.ribbon-tabs .active {
    margin-bottom: -1px;
    padding: 0 12px 3px;
    border: 1px solid #2c2c2c;
    border-bottom: none;
    background: linear-gradient(#7a7a7a, #5e5e5e);
    color: #eee;
}

.ribbon-min {
    height: 26px;
    margin-left: 32px;
    padding-bottom: 3px;
    gap: 8px;
}

.ribbon {
    height: 148px;
    display: flex;
    align-items: flex-start;
    background: linear-gradient(#4b4b4b, #363636);
    border-bottom: 1px solid #8a8a8a;
}

.panel {
    height: 146px;
    display: flex;
    flex-direction: column;
    background: #5d5d5d;
    border-right: 2px solid #434343;
}

.draw { width: 338px; }
.modify { width: 199px; }
.annotation { width: 129px; }
.layers { width: 410px; }
.block { width: 121px; }

.panel-body {
    flex: 1;
    display: flex;
    padding: 9px 4px 0;
}

.panel-title {
    height: 28px;
    gap: 10px;
    background: linear-gradient(#4f4f4f, #474747);
}

.big {
    flex-direction: column;
    justify-content: flex-start;
    line-height: 22px;
}

.big svg { margin-bottom: 9px; }
.big .caret { margin-top: 3px; }

.draw .big { width: 70px; }
.draw .big:first-child { width: 59px; }
.draw .big:nth-child(2) { width: 72px; }
.draw .big:nth-child(3) { width: 77px; }
.draw .tools { margin-left: -1px; }
.annotation .big { width: 66px; }
.annotation .tools { margin-left: 7px; }
.layers .big { width: 90px; }
.block .big { width: 58px; margin-right: 4px; }

.letter {
    height: 46px;
    margin-bottom: 9px;
    font-size: 56px;
    line-height: 46px;
}

.tools {
    display: flex;
    flex-direction: column;
    align-items: flex-start;
    gap: 12px;
    padding-top: 3px;
}

.drop { gap: 10px; }

.tool-grid {
    display: grid;
    grid-template-columns: 42px 42px 64px 42px;
    grid-auto-rows: 24px;
    row-gap: 12px;
    padding: 12px 3px 0;
}

.layer-combo {
    display: flex;
    align-items: center;
    gap: 5px;
    width: 312px;
    height: 32px;
    margin-top: -1px;
    padding: 0 4px;
    background: linear-gradient(#4b4b4b, #6b6b6b);
    border: 2px solid #3a3a3a;
}

.layer-combo select {
    flex: 1;
    appearance: none;
    padding-left: 4px;
}

.swatch {
    width: 21px;
    height: 21px;
    background: #fff;
    border: 2px solid #111;
}

.layer-grid {
    display: grid;
    grid-template-columns: repeat(5, 36px);
    gap: 12px 0;
    margin-top: 8px;
}

.collapsed {
    width: 88px;
    height: 146px;
    margin-left: 3px;
    flex-direction: column;
    justify-content: flex-start;
    padding: 7px 0 6px;
    background: linear-gradient(#6e6e6e, #555);
    border: 1px solid #333;
    line-height: 22px;
}

.panel + .collapsed { margin-left: 1px; }
.collapsed svg { margin-bottom: 7px; }
.compact svg { margin-bottom: 5px; }
.collapsed .caret { margin-top: auto; }

/* drawing file tabs */
.file-tabs {
    height: 44px;
    padding: 6px 0 0 16px;
    display: flex;
    background: #363636;
    border-bottom: 5px solid #5b5b5b;
}

.file-tab {
    position: relative;
    width: 294px;
    padding-left: 31px;
    display: flex;
    align-items: center;
    gap: 13px;
    white-space: nowrap;
}

.shape {
    position: absolute;
    left: 0;
    top: 0;
    width: 100%;
    height: 100%;
}

.file-tab a, .file-tab button {
    position: relative;
    line-height: 32px;
}

.file-tabs .new-tab {
    height: 22px;
    margin: 6px 0 0 -11px;
    z-index: 1;
}

/* model space */
.canvas {
    position: relative;
    flex: 1;
    min-height: 0;
    overflow: hidden;
    background: #22262f;
}

.drawing {
    position: absolute;
    width: 100%;
    height: 100%;
    pointer-events: none;
}

.view-label {
    position: absolute;
    left: 5px;
    top: 9px;
    line-height: 24px;
    color: #eef0f4;
}

.view-controls {
    position: absolute;
    top: 14px;
    right: 17px;
    display: flex;
    gap: 14px;
}

.view-cube {
    position: absolute;
    top: 53px;
    right: 18px;
}

.view-cube text {
    font: 700 20px "Liberation Sans", sans-serif;
    fill: #b4b5ba;
    text-anchor: middle;
}

.view-cube .top {
    font: 700 13px "Open Sans", sans-serif;
    fill: #474a55;
}

.wcs {
    position: absolute;
    top: 216px;
    right: 53px;
    width: 72px;
    height: 27px;
    gap: 9px;
    border: 2px solid #7d808c;
    border-radius: 6px;
    background: #8e909c;
    color: #4a4d58;
    font: 17px "Liberation Sans", sans-serif;
}

.nav-bar {
    position: absolute;
    top: 280px;
    right: 5px;
    width: 48px;
    height: 318px;
    padding: 2px 4px;
    display: flex;
    flex-direction: column;
    align-items: center;
    justify-content: space-between;
    background: #5a5d66;
    border: 1px solid #6a6d76;
    border-radius: 5px;
}

.nav-bar svg {
    fill: none;
    stroke: #40444d;
    stroke-width: 2;
}

.nav-bar .corner {
    align-self: flex-end;
    stroke-width: 1;
}

.nav-bar .wheel { margin-top: 8px; }
.nav-bar .low { margin-top: 4px; }

.nav-bar hr {
    width: 100%;
    margin: 0;
    border: none;
    border-top: 1px solid #676a73;
}

.ucs {
    position: absolute;
    left: 10px;
    bottom: 12px;
}

.ucs text {
    font: 300 28px "Open Sans", sans-serif;
    fill: #e8eaf0;
    text-anchor: middle;
}

.history {
    position: absolute;
    left: 404px;
    bottom: 49px;
    display: flex;
    flex-direction: column;
    align-items: flex-start;
    gap: 8px;
    font-family: "DejaVu Sans Mono", monospace;
}

.history p {
    margin: 0;
    padding: 0 4px;
    line-height: 22px;
    border-radius: 3px;
    background: #5c5c5e;
    color: #fff;
}

.history .old {
    background: #4b4d52;
    color: #b5b6b9;
}

.history .mid {
    background: #535458;
    color: #d8d8da;
}

.command-bar {
    position: absolute;
    left: 315px;
    right: 315px;
    bottom: 1px;
    height: 43px;
    display: flex;
    align-items: center;
    gap: 13px;
    padding-left: 6px;
    background: linear-gradient(#66676b, #3e3f44);
    border: 1px solid #66686e;
    font-family: "DejaVu Sans Mono", monospace;
}

.dots {
    width: 8px;
    height: 28px;
    margin-right: -4px;
    background: radial-gradient(circle, #aaa 1px, transparent 2px) 0 0 / 4px 5px;
}

.command-field {
    flex: 1;
    align-self: stretch;
    display: flex;
    align-items: center;
    margin-left: -6px;
    padding: 0 5px 0 8px;
    background: #bbbcc1;
    border-radius: 3px;
}

.command-field button { gap: 7px; }

.command-field input {
    flex: 1;
    height: 30px;
    padding-left: 10px;
    font-style: italic;
}

.command-field input::placeholder {
    color: #707176;
    opacity: 1;
}

/* layout tabs and status bar */
.status-bar {
    height: 43px;
    display: flex;
    justify-content: space-between;
    background: #363636;
    border-top: 1px solid #6a6a6a;
}

.layout-tabs {
    display: flex;
    padding-left: 14px;
}

.layout-tabs a {
    position: relative;
    width: 93px;
    height: 27px;
    text-align: center;
    line-height: 26px;
    color: #b5b5b5;
}

.layout-tabs .active {
    z-index: 1;
    font-weight: 700;
    color: #fff;
}

.layout-tabs span { position: relative; }

.layout-tabs .new-tab {
    height: 26px;
    margin-left: 7px;
}

.status-cells {
    display: flex;
    height: 41px;
}

.cell {
    display: flex;
    align-items: center;
    justify-content: space-around;
    margin-left: 2px;
    background: #4f4f4f;
    border: 1px solid #7a7a7a;
    color: #fff;
    white-space: nowrap;
}

.cell.joined {
    margin-left: 0;
    border-left: none;
}

.cell button { gap: 5px; }
.coords { width: 228px; justify-content: center; padding-left: 8px; font-size: 18px; }
.model { width: 73px; justify-content: center; font-size: 18px; }
.grid-cell { width: 97px; }
.dyn { width: 38px; justify-content: center; }
.track { width: 155px; }
.snap { width: 96px; }
.anno { width: 160px; }
.gear { width: 61px; }
.plus { width: 38px; justify-content: center; }
.disc { width: 38px; justify-content: center; }
.isolate { width: 77px; }
.end { width: 75px; }

.glow {
    filter: drop-shadow(0 0 3px #0a5cd8);
}

.watermark {
    position: absolute;
    right: 2px;
    bottom: 1px;
    font: 39px/44px "Liberation Sans", sans-serif;
    color: #666;
    opacity: 0.7;
    pointer-events: none;
}
```
